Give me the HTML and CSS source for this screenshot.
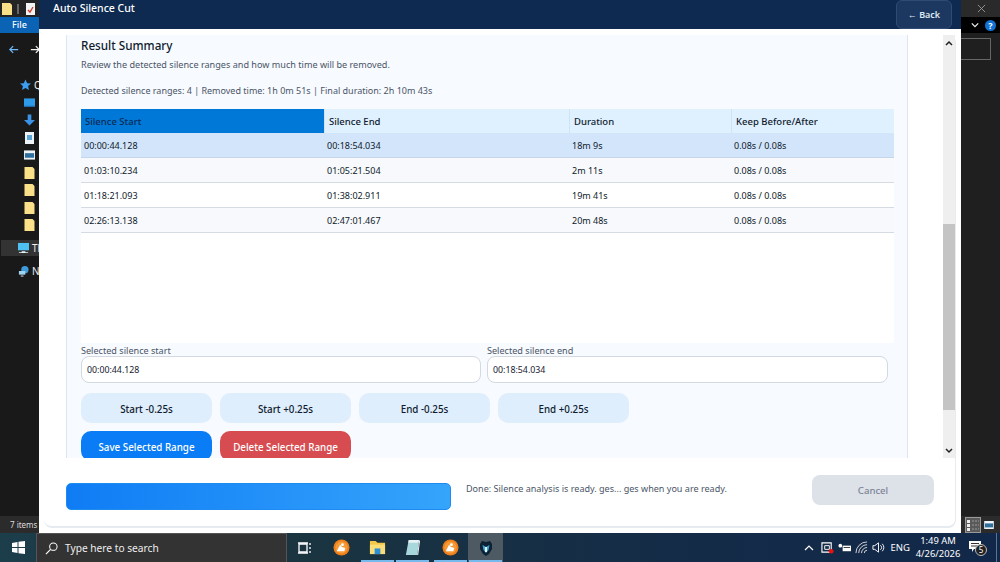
FILE: index.html
```html
<!DOCTYPE html>
<html lang="en">
<head>
<meta charset="utf-8">
<title>Auto Silence Cut</title>
<link rel="stylesheet" href="styles.css">
</head>
<body>
<div class="desktop">
  <aside class="explorer-left">
    <div class="qat">
      <svg class="qat-folder" viewBox="0 0 10 12"><path d="M0 0h8l2 2v10H0z" fill="#fbe08a"/></svg>
      <span class="qat-sep"></span>
      <svg class="qat-doc" viewBox="0 0 9 12"><path d="M0 0h9v12H0z" fill="#f4f4f4"/><path d="M2 7l2 2 3-5" stroke="#d8402a" stroke-width="1.400" fill="none"/></svg>
    </div>
    <div class="file-tab">File</div>
    <div class="nav-arrows">
      <svg viewBox="0 0 12 10" class="arrow"><path d="M5 1L1 5l4 4M1 5h10" stroke="#6fb8f5" stroke-width="1.500" fill="none"/></svg>
      <svg viewBox="0 0 12 10" class="arrow"><path d="M7 1l4 4-4 4M11 5H1" stroke="#f2f2f2" stroke-width="1.500" fill="none"/></svg>
    </div>
    <ul class="tree">
      <li class="t-quick"><svg viewBox="0 0 12 12"><path d="M6 0l1.800 4 4.200.4-3.200 2.800 1 4.300L6 9.200 2.200 11.500l1-4.300L0 4.400 4.200 4z" fill="#3d9df0"/></svg><span>Quick</span></li>
      <li><svg viewBox="0 0 12 10"><path d="M0 0h12v9H0z" fill="#2f9be8"/><path d="M0 8h12v1H0z" fill="#1b6fb5"/></svg></li>
      <li><svg viewBox="0 0 12 12"><path d="M4 0h4v6h4l-6 6-6-6h4z" fill="#3a93e6"/></svg></li>
      <li><svg viewBox="0 0 9 12"><path d="M0 0h9v12H0z" fill="#eef3f7"/><path d="M2 3h5v5H2z" fill="#5aa6d6"/></svg></li>
      <li><svg viewBox="0 0 12 10"><path d="M0 0h12v10H0z" fill="#eef3f7"/><path d="M1 3h10v5H1z" fill="#2e6f9e"/></svg></li>
      <li><svg viewBox="0 0 10 12"><path d="M0 0h8l2 2v10H0z" fill="#fbe08a"/></svg></li>
      <li><svg viewBox="0 0 10 12"><path d="M0 0h8l2 2v10H0z" fill="#fbe08a"/></svg></li>
      <li><svg viewBox="0 0 10 12"><path d="M0 0h8l2 2v10H0z" fill="#fbe08a"/></svg></li>
      <li><svg viewBox="0 0 10 12"><path d="M0 0h8l2 2v10H0z" fill="#fbe08a"/></svg></li>
      <li class="t-pc"><svg viewBox="0 0 12 11"><path d="M0 0h12v8H0z" fill="#4fc0f2"/><path d="M4 9h4v1H4zM1 10h10v1H1z" fill="#e8f2f8"/></svg><span>This</span></li>
      <li class="t-net"><svg viewBox="0 0 12 12"><circle cx="7.500" cy="4.500" r="4" fill="#3f9ad8"/><path d="M1 6h7v4H1z" fill="#9fd3ee"/><path d="M3 11h3v1H3z" fill="#e8f2f8"/></svg><span>Net</span></li>
    </ul>
    <div class="status-left">7 items</div>
  </aside>

  <main class="app">
    <header class="app-head">
      <h1 class="app-title">Auto Silence Cut</h1>
      <button class="back-btn">← Back</button>
    </header>
    <div class="card">
      <div class="scroll-row">
        <section class="panel">
          <h2 class="sum-title">Result Summary</h2>
          <p class="sum-sub">Review the detected silence ranges and how much time will be removed.</p>
          <p class="sum-stat">Detected silence ranges: 4 | Removed time: 1h 0m 51s | Final duration: 2h 10m 43s</p>
          <div class="table-wrap">
            <table class="ranges">
              <colgroup><col class="c1"><col class="c2"><col class="c3"><col class="c4"></colgroup>
              <thead>
                <tr><th class="th-active">Silence Start</th><th>Silence End</th><th>Duration</th><th>Keep Before/After</th></tr>
              </thead>
              <tbody>
                <tr class="sel"><td>00:00:44.128</td><td>00:18:54.034</td><td>18m 9s</td><td>0.08s / 0.08s</td></tr>
                <tr><td>01:03:10.234</td><td>01:05:21.504</td><td>2m 11s</td><td>0.08s / 0.08s</td></tr>
                <tr class="plain"><td>01:18:21.093</td><td>01:38:02.911</td><td>19m 41s</td><td>0.08s / 0.08s</td></tr>
                <tr><td>02:26:13.138</td><td>02:47:01.467</td><td>20m 48s</td><td>0.08s / 0.08s</td></tr>
              </tbody>
            </table>
          </div>
          <div class="fields">
            <label class="field"><span class="f-label">Selected silence start</span><input class="f-input" value="00:00:44.128"></label>
            <label class="field"><span class="f-label">Selected silence end</span><input class="f-input" value="00:18:54.034"></label>
          </div>
          <div class="btn-row">
            <button class="btn soft">Start -0.25s</button>
            <button class="btn soft">Start +0.25s</button>
            <button class="btn soft">End -0.25s</button>
            <button class="btn soft">End +0.25s</button>
          </div>
          <div class="btn-row second">
            <button class="btn save">Save Selected Range</button>
            <button class="btn del">Delete Selected Range</button>
          </div>
        </section>
        <div class="scrollbar">
          <svg class="sb-arrow sb-up" viewBox="0 0 8 6"><path d="M1 5l3-3 3 3" stroke="#222" stroke-width="1.500" fill="none"/></svg>
          <div class="sb-track"><div class="sb-thumb"></div></div>
          <svg class="sb-arrow sb-down" viewBox="0 0 8 6"><path d="M1 1l3 3 3-3" stroke="#222" stroke-width="1.500" fill="none"/></svg>
        </div>
      </div>
      <footer class="foot">
        <div class="progress"></div>
        <p class="foot-msg">Done: Silence analysis is ready. ges... ges when you are ready.</p>
        <button class="cancel">Cancel</button>
      </footer>
    </div>
  </main>

  <aside class="explorer-right">
    <div class="r-top"><svg viewBox="0 0 10 10" class="r-x"><path d="M1 1l8 8M9 1l-8 8" stroke="#9a9a9a" stroke-width="1"/></svg></div>
    <div class="r-ribbon">
      <svg viewBox="0 0 10 6" class="r-chev"><path d="M1 1l4 4 4-4" stroke="#eee" stroke-width="1.600" fill="none"/></svg>
      <span class="r-help">?</span>
    </div>
    <div class="r-search"></div>
    <div class="r-status">
      <span class="view-a"><svg viewBox="0 0 14 14"><path d="M1 2h3v3H1zM1 6h3v3H1zM1 10h3v3H1z" fill="#eee"/><path d="M6 3h7M6 7h7M6 11h7" stroke="#999" stroke-dasharray="2 1"/></svg></span>
      <svg viewBox="0 0 12 10" class="view-b"><path d="M0 0h12v10H0z" fill="#f0f4f8"/><path d="M1 3h10v5H1z" fill="#2e6f9e"/></svg>
    </div>
  </aside>

  <nav class="taskbar">
    <div class="start"><svg viewBox="0 0 13 13"><path d="M0 2l5.500-1v5H0zM6.500 .8L13 0v6H6.500zM0 7h5.500v5L0 11zM6.500 7H13v6l-6.500-.8z" fill="#fff"/></svg></div>
    <div class="search">
      <svg viewBox="0 0 14 14"><circle cx="9" cy="5" r="4" stroke="#fff" stroke-width="1.100" fill="none"/><path d="M6 8l-5 5" stroke="#fff" stroke-width="1.300"/></svg>
      <span>Type here to search</span>
    </div>
    <div class="tasks">
      <span class="task tv"><svg viewBox="0 0 14 12"><path d="M1 2h8v8H1z" stroke="#fff" stroke-width="1.300" fill="none"/><path d="M0 1h10M0 11h10M12 1v2M12 5v2M12 9v2" stroke="#fff" stroke-width="1.300"/></svg></span>
      <span class="task t-edge"><svg viewBox="0 0 18 18"><circle cx="9" cy="9" r="8.500" fill="#ee7d1c"/><circle cx="9" cy="9" r="6.500" fill="#f59a35"/><path d="M4 13l3.500-7 2 2.500 3.500 1-1 3.500z" fill="#fff"/><circle cx="10" cy="6" r="1.500" fill="#fff"/></svg></span>
      <span class="task on"><svg viewBox="0 0 18 16"><path d="M1 1h6l2 2h8v12H1z" fill="#f3c84a"/><path d="M1 5h16v10H1z" fill="#f8dd78"/><path d="M6 9h6v6H6z" fill="#2b8fd8"/></svg></span>
      <span class="task on"><svg viewBox="0 0 16 18"><path d="M4 1h11l-2 16H1z" fill="#a8d8dc"/><path d="M4 1h11l-1 3H3.500z" fill="#e7f2f4"/><path d="M13 17l2-16 1 1-2 15z" fill="#f2f2f2"/></svg></span>
      <span class="task on t-gap"><svg viewBox="0 0 18 18"><circle cx="9" cy="9" r="8.500" fill="#ee7d1c"/><circle cx="9" cy="9" r="6.500" fill="#f59a35"/><path d="M4 13l3.500-7 2 2.500 3.500 1-1 3.500z" fill="#fff"/><circle cx="10" cy="6" r="1.500" fill="#fff"/></svg></span>
      <span class="task on active"><svg viewBox="0 0 14 16"><path d="M1 4l2-3 4 1 4-1 2 3v5l-3 5-3 2-3-2-3-5z" fill="#0d2233"/><path d="M3.500 5l3.500 2 3.500-2-1 5-2.500 3-2.500-3z" fill="#3ea6d4"/><path d="M6 7h2v5H6z" fill="#e8f4fa"/></svg></span>
    </div>
    <div class="tray">
      <svg viewBox="0 0 10 6" class="tr-up"><path d="M1 5l4-4 4 4" stroke="#fff" stroke-width="1.200" fill="none"/></svg>
      <svg viewBox="0 0 14 14" class="tr-ic"><path d="M1 2h10v10H1z" stroke="#fff" stroke-width="1.200" fill="none"/><path d="M4 5h5v4H4z" stroke="#fff" fill="none"/><circle cx="11" cy="11" r="2.500" fill="#f01010"/></svg>
      <svg viewBox="0 0 14 10" class="tr-ic"><circle cx="2.500" cy="3" r="2" fill="#fff"/><path d="M5 3h9v6H5z" fill="#fff"/><path d="M6 5h7" stroke="#333"/></svg>
      <svg viewBox="0 0 14 14" class="tr-ic"><path d="M1 13a12 12 0 0 1 12-12M4 13a9 9 0 0 1 9-9M7 13a6 6 0 0 1 6-6M10 13a3 3 0 0 1 3-3" stroke="#ddd" fill="none"/></svg>
      <svg viewBox="0 0 14 14" class="tr-ic"><path d="M1 5h2l4-3v10l-4-3H1z" stroke="#fff" fill="none"/><path d="M9 4.500a3 3 0 0 1 0 5M11 3a5.500 5.500 0 0 1 0 8" stroke="#fff" fill="none"/></svg>
      <span class="tr-lang">ENG</span>
      <span class="tr-clock"><span>1:49 AM</span><span>4/26/2026</span></span>
      <span class="tr-note"><svg viewBox="0 0 12 12"><path d="M0 0h12v8H5l-2 3V8H0z" fill="#fff"/><path d="M2 2.500h8M2 5h8" stroke="#333"/></svg><b class="tr-badge">5</b></span>
      <span class="tr-desk"></span>
    </div>
  </nav>
</div>
</body>
</html>
```
FILE: styles.css
```css
* { box-sizing: border-box; }
html, body { margin: 0; padding: 0; }
body { width: 1000px; height: 562px; overflow: hidden; background: #1c1c1c; font-family: "Noto Sans", "Open Sans", sans-serif; }
button { font-family: inherit; border: 0; padding: 0; }

.desktop { display: grid; width: 1000px; height: 562px; grid-template-columns: 39px 922px 39px; grid-template-rows: 533px 29px; }

/* Explorer behind */
.explorer-left { background: #191919; overflow: hidden; display: flex; flex-direction: column; color: #eee; }
.qat { height: 17px; background: #242424; display: flex; align-items: center; gap: 5px; padding-left: 2px; }
.qat-folder { width: 10px; height: 12px; }
.qat-sep { width: 2px; height: 10px; background: #666; }
.qat-doc { width: 9px; height: 12px; margin-left: 2px; }
.file-tab { height: 16px; width: 39px; background: #0a63b4; color: #fff; font-size: 9px; line-height: 16px; text-align: center; font-weight: 500; }
.nav-arrows { height: 32px; display: flex; align-items: center; gap: 11px; padding: 0 0 0 9px; flex: none; }
.arrow { width: 10px; height: 9px; flex: none; }
.tree { list-style: none; margin: 11px 0 0; padding: 0; flex: 1; }
.tree li { height: 17.500px; display: flex; align-items: center; justify-content: flex-start; padding-left: 24px; font-size: 10px; white-space: nowrap; }
.tree li svg { width: 11px; height: 12px; flex: none; }
.tree .t-quick { padding-left: 20px; height: 18px; gap: 3px; }
.tree .t-pc { margin: 6px 0 0 1px; height: 16px; background: #333; padding-left: 17px; gap: 3px; }
.tree .t-net { margin-top: 6px; padding-left: 18px; gap: 3px; }
.status-left { height: 17px; background: #2b2b2b; font-size: 8px; line-height: 17px; padding-left: 10px; white-space: nowrap; color: #ddd; }

.explorer-right { background: #1f1f1f; display: flex; flex-direction: column; }
.r-top { height: 17px; background: #2a2a2a; display: flex; align-items: center; justify-content: center; padding-left: 2px; }
.r-x { width: 9px; height: 9px; }
.r-ribbon { height: 16px; background: #000; display: flex; align-items: center; gap: 4px; padding-left: 10px; }
.r-chev { width: 8px; height: 6px; }
.r-help { width: 11px; height: 11px; border-radius: 50%; background: #1272d4; color: #fff; font-size: 9px; line-height: 11px; text-align: center; font-weight: 700; margin-left: 2px; }
.r-search { height: 22px; margin: 5px 9px 0 0; border: 1px solid #666; border-left: 0; }
.r-status { margin-top: auto; height: 17px; background: #2b2b2b; display: flex; align-items: center; gap: 3px; padding-left: 4px; }
.view-a { width: 16px; height: 16px; background: #5a5a5a; border: 1px solid #999; display: flex; }
.view-a svg { width: 14px; height: 14px; }
.view-b { width: 10px; height: 8px; }

/* App window */
.app { background: #fff; display: flex; flex-direction: column; overflow: hidden; }
.app-head { height: 29px; flex: none; background: #0e2a50; display: flex; justify-content: space-between; align-items: flex-start; padding: 0 9px 0 14px; }
.app-title { margin: 0; font-size: 10.500px; line-height: 16px; font-weight: 500; color: #fff; }
.back-btn { width: 56px; height: 29px; border: 1px solid #2f4b74; border-radius: 6px; background: #1c3760; color: #dfe7f2; font-size: 9px; font-weight: 600; }

.card { margin: 6px 5px 5px 5px; flex: 1; min-height: 0; background: #fff; border: solid #e6eaf1; border-width: 0 1px 2px 0; border-radius: 8px; display: flex; flex-direction: column; }
.scroll-row { height: 423px; flex: none; display: flex; overflow: hidden; padding-left: 22px; }
.panel { width: 842px; flex: none; background: #f7faff; border: solid #dfe5ee; border-width: 0 1px; padding: 0 14px; overflow: hidden; }
.sum-title { margin: 2px 0 0; font-size: 11.700px; line-height: 16px; font-weight: 500; color: #101b2d; }
.sum-sub { margin: 5px 0 0; font-size: 9.100px; line-height: 14px; color: #4a5567; }
.sum-stat { margin: 12px 0 0; font-size: 9px; line-height: 14px; color: #4a5567; }

.table-wrap { margin-top: 11px; height: 234px; width: 813px; background: #fff; }
.ranges { width: 813px; border-collapse: separate; border-spacing: 0; table-layout: fixed; font-size: 9px; color: #0f1a2a; }
.c1 { width: 243px; } .c2 { width: 245px; } .c3 { width: 162px; } .c4 { width: 163px; }
.ranges th { height: 24px; background: #dff0ff; text-align: left; font-size: 9.500px; font-weight: 500; color: #101b2d; padding: 0 4px; border-left: 1px solid #cfe3f6; }
.ranges th.th-active { background: #0078d7; color: #0a2a52; padding-left: 4px; border-left: 0; }
.ranges td { height: 25px; padding: 0 4px 0 3px; background: #f7f9fd; border-bottom: 1px solid #d5dbe3; }
.ranges .plain td { background: #fff; }
.ranges .sel td { background: #d3e5fb; border-bottom-color: #c5d5ea; }

.fields { display: flex; gap: 6px; }
.field { display: flex; flex-direction: column; width: 400px; }
.field + .field { width: 401px; }
.f-label { font-size: 9.100px; line-height: 13px; padding-top: 1px; height: 13px; color: #4a5567; }
.f-input { height: 27px; border: 1px solid #d3d9e2; border-radius: 8px; background: #fff; padding: 0 5px; font: 8.800px "Noto Sans", sans-serif; color: #16202f; outline: 0; }

.btn-row { display: flex; gap: 8px; margin-top: 10px; }
.btn-row.second { margin-top: 8px; }
.btn { width: 131px; height: 30px; border-radius: 10px; padding-top: 2px; font-size: 9.800px; font-weight: 500; flex: none; }
.soft { background: #dfeefd; color: #101b2d; }
.save { background: #0a7cf5; color: #fff; }
.del { background: #d64c50; color: #fff; }

.scrollbar { width: 12px; margin-left: 35px; background: #efefef; display: flex; flex-direction: column; }
.sb-arrow { width: 8px; height: 6px; flex: none; align-self: center; }
.sb-up { margin: 5px 0 6px; }
.sb-down { margin: 8px 0 4px; }
.sb-track { flex: 1; display: flex; flex-direction: column; justify-content: flex-end; padding-bottom: 30px; }
.sb-thumb { height: 186px; background: #c4c4c4; }

.foot { flex: 1; display: flex; align-items: flex-start; padding: 17px 21px 0 22px; }
.progress { width: 385px; height: 27px; margin-top: 8px; border-radius: 5px; background: linear-gradient(90deg, #0f7cf5, #35a4fb); border: 1px solid #1c8cf0; flex: none; }
.foot-msg { margin: 7px 0 0 15px; font-size: 9.050px; line-height: 14px; color: #4a5567; flex: 1; white-space: nowrap; }
.cancel { width: 122px; height: 30px; border-radius: 8px; background: #dde1e8; color: #7b8597; font-size: 9.600px; font-weight: 500; padding-top: 1px; flex: none; }

/* Taskbar */
.taskbar { grid-column: 1 / -1; display: flex; align-items: stretch; background: linear-gradient(90deg, #1c3d4a 0%, #1a3440 30%, #142b48 70%, #12284a 100%); color: #fff; }
.start { width: 36px; display: flex; align-items: center; justify-content: center; }
.start svg { width: 13px; height: 13px; }
.search { width: 251px; background: #333; border: 1px solid #555; border-width: 1px 1px 0; display: flex; align-items: center; gap: 7px; padding-left: 8px; font-size: 10.200px; color: #eee; }
.search svg { width: 13px; height: 13px; }
.tasks { display: flex; }
.task { width: 35px; display: flex; align-items: center; justify-content: center; position: relative; }
.task svg { width: 17px; height: 17px; }
.task.tv svg { width: 14px; height: 12px; }
.t-edge { width: 38px; }
.t-gap { margin-left: 3px; }
.on::after { content: ""; position: absolute; left: 1px; right: 1px; bottom: 0; height: 2px; background: #76b9ed; }
.active { background: #4e5a63; }
.active svg { width: 14px; height: 16px; }
.tray { margin-left: auto; display: flex; align-items: center; }
.tr-up { width: 10px; height: 6px; margin-right: 7px; }
.tr-ic { width: 13px; height: 13px; margin-right: 4px; }
.tr-lang { font-size: 9.500px; margin: 0 6px 0 2px; }
.tr-clock { display: flex; flex-direction: column; align-items: center; font-size: 9.400px; line-height: 13px; width: 44px; padding-bottom: 2px; }
.tr-note { width: 24px; height: 20px; margin: 0 3px 0 9px; position: relative; }
.tr-note svg { width: 12px; height: 12px; position: absolute; left: 0; top: 3px; }
.tr-badge { position: absolute; left: 6px; top: 6px; width: 12px; height: 12px; border-radius: 50%; background: #222; border: 1px solid #bbb; font-size: 8px; line-height: 10px; text-align: center; font-weight: 400; }
.tr-desk { width: 1px; height: 100%; background: #5b7490; margin-right: 3px; }
```
